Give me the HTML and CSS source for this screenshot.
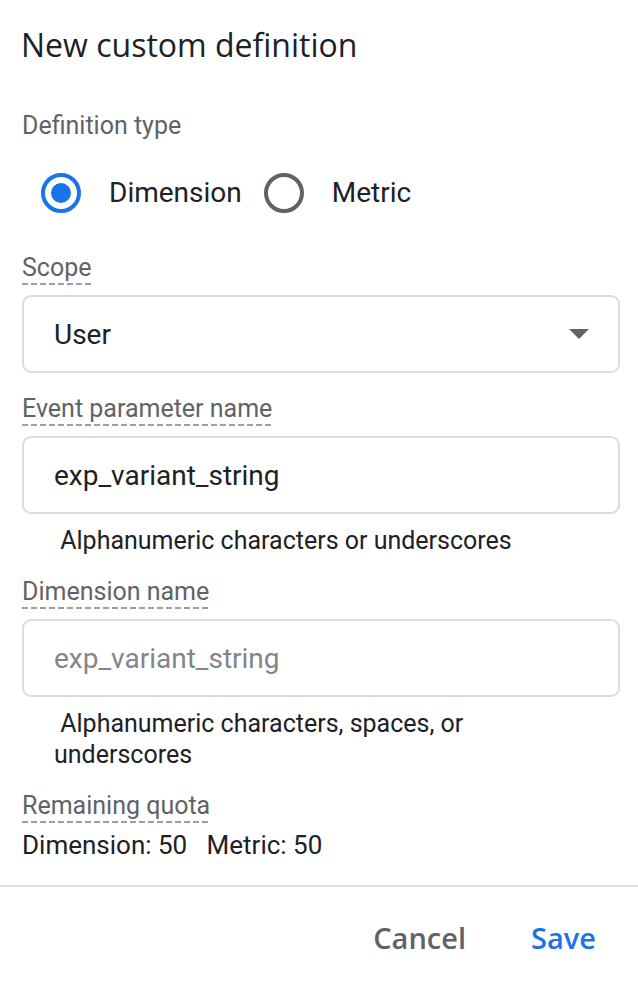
FILE: index.html
```html
<!DOCTYPE html>
<html lang="en">
<head>
    <meta charset="UTF-8">
    <meta name="viewport" content="width=device-width, initial-scale=1.0">
    <title>New custom definition</title>
    <link rel="stylesheet" href="styles.css">
</head>
<body>
    <div id="dialog">
        <h2 class="dialog-title">New custom definition</h2>

        <div class="dialog-body">
            <div class="section-label">Definition type</div>

            <!-- Dimension / Metric switch -->
            <div class="radio-group">
                <label class="radio checked">
                    <span class="radio-ring"><span class="radio-dot"></span></span>
                    <span class="radio-text">Dimension</span>
                </label>
                <label class="radio">
                    <span class="radio-ring"><span class="radio-dot"></span></span>
                    <span class="radio-text">Metric</span>
                </label>
            </div>

            <div class="field first">
                <div class="field-label"><span class="dotted">Scope</span></div>
                <div class="select-box">
                    <span class="value">User</span>
                    <span class="caret"></span>
                </div>
            </div>

            <div class="field">
                <div class="field-label"><span class="dotted">Event parameter name</span></div>
                <div class="text-box">
                    <span class="value">exp_variant_string</span>
                </div>
                <div class="hint"> Alphanumeric characters or underscores</div>
            </div>

            <div class="field">
                <div class="field-label"><span class="dotted">Dimension name</span></div>
                <div class="text-box">
                    <span class="value placeholder">exp_variant_string</span>
                </div>
                <div class="hint"> Alphanumeric characters, spaces, or underscores</div>
            </div>

            <div class="field">
                <div class="field-label"><span class="dotted">Remaining quota</span></div>
                <div class="quota">Dimension: 50&nbsp;&nbsp; Metric: 50</div>
            </div>
        </div>

        <div class="dialog-actions">
            <button class="action cancel">Cancel</button>
            <button class="action save">Save</button>
        </div>
    </div>
</body>
</html>
```

FILE: styles.css
```css
body {
    margin: 0;
    padding: 0;
    background: #ffffff;
    font-family: Roboto, "Liberation Sans", sans-serif;
    color: #202124;
}

#dialog {
    background: white;
    min-height: 982px;
}

.dialog-title {
    margin: 25px 0 0 21px;
    font-family: "Open Sans", sans-serif;
    font-size: 32px;
    font-weight: 400;
    line-height: 40px;
    color: #202124;
}

.dialog-body {
    padding: 0 18px 0 22px;
}

.section-label {
    margin-top: 45px;
    font-size: 25px;
    line-height: 32px;
    color: #5f6368;
}

/* radio buttons */
.radio-group {
    display: flex;
    align-items: center;
    margin-top: 31px;
    padding-left: 19px;
}

.radio {
    display: flex;
    align-items: center;
    margin-right: 22px;
    cursor: pointer;
}

.radio-ring {
    display: flex;
    align-items: center;
    justify-content: center;
    width: 40px;
    height: 40px;
    border: 4px solid #5f6368;
    border-radius: 50%;
    box-sizing: border-box;
}

.radio-dot {
    width: 20px;
    height: 20px;
    border-radius: 50%;
}

.radio.checked .radio-ring {
    border-color: #1a73e8;
}

.radio.checked .radio-dot {
    background: #1a73e8;
}

.radio-text {
    margin-left: 28px;
    font-size: 28px;
    line-height: 40px;
    color: #202124;
}

/* form fields */
.field {
    margin-top: 20px;
}

.field.first {
    margin-top: 39px;
}

.field-label {
    line-height: 0;
}

.dotted {
    display: inline-block;
    font-size: 25px;
    line-height: 31px;
    padding-bottom: 2px;
    color: #5f6368;
    background: repeating-linear-gradient(to right, #9aa0a6 0 6px, transparent 6px 9px) left bottom / 100% 2px no-repeat;
}

.select-box,
.text-box {
    display: flex;
    align-items: center;
    height: 78px;
    margin-top: 10px;
    padding: 0 29px 0 30px;
    border: 2px solid #dadce0;
    border-radius: 9px;
    box-sizing: border-box;
}

.value {
    flex: 1;
    font-size: 28px;
    color: #202124;
}

.value.placeholder {
    color: #80868b;
}

.caret {
    width: 0;
    height: 0;
    border-left: 10px solid transparent;
    border-right: 10px solid transparent;
    border-top: 10px solid #5f6368;
}

.hint {
    padding: 11px 32px 0 32px;
    font-size: 25px;
    line-height: 31px;
    white-space: pre-wrap;
    color: #202124;
}

.quota {
    margin-top: 6px;
    font-size: 26px;
    line-height: 32px;
    color: #202124;
}

/* footer */
.dialog-actions {
    display: flex;
    justify-content: flex-end;
    margin-top: 24px;
    padding: 21px 22px 0 0;
    border-top: 2px solid #dadce0;
}

.action {
    padding: 0 20px;
    margin-left: 25px;
    border: none;
    background: none;
    font-family: "Open Sans", sans-serif;
    font-size: 29px;
    font-weight: 600;
    line-height: 60px;
    cursor: pointer;
}

.cancel {
    color: #5f6368;
}

.save {
    color: #1a73e8;
}
```
